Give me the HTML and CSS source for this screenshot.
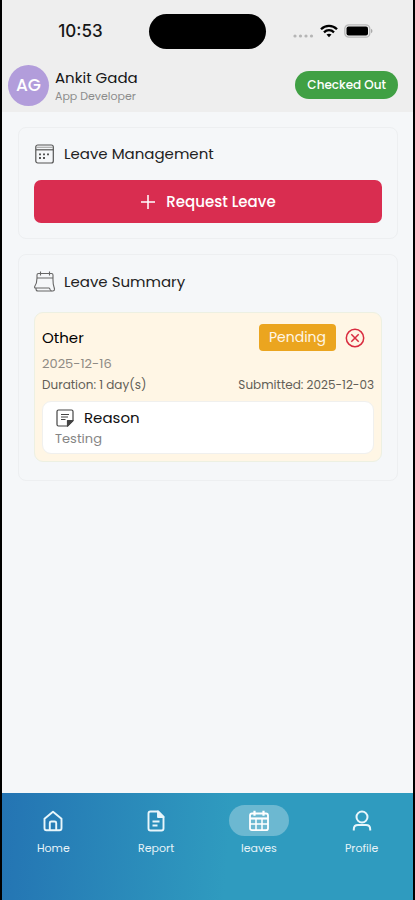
FILE: index.html
```html
<!DOCTYPE html>
<html lang="en">
<head>
<meta charset="utf-8">
<meta name="viewport" content="width=device-width, initial-scale=1">
<title>Leave Management</title>
<link rel="stylesheet" href="styles.css">
</head>
<body>
<div class="phone">
  <div class="status">
    <span class="time">10:53</span>
    <span class="island"></span>
    <span class="signals">
      <svg width="22" height="6" viewBox="0 0 22 6" fill="#b5b5b5"><circle cx="3" cy="4" r="1.6"/><circle cx="8.500" cy="4" r="1.600"/><circle cx="14" cy="4" r="1.600"/><circle cx="19.500" cy="4" r="1.600"/></svg>
      <svg width="18" height="14" viewBox="0 0 18 14" fill="none" stroke="#000" stroke-width="2.300"><path d="M1 5.200C5.500.700 12.500.700 17 5.200"/><path d="M4 8.300c2.900-2.800 7.100-2.800 10 0"/><path d="M6.500 10.600c1.500-1.300 3.500-1.300 5 0L9 13.200z" fill="#000" stroke="none"/></svg>
      <svg width="29" height="14" viewBox="0 0 29 14"><rect x=".8" y=".8" width="25" height="12.400" rx="4" fill="none" stroke="#b9b9b9" stroke-width="1.300"/><rect x="2.500" y="2.500" width="21.500" height="9" rx="2" fill="#000"/><path d="M27 4.800c2 .8 2 3.600 0 4.400z" fill="#aaa"/></svg>
    </span>
  </div>
  <header class="header">
    <span class="avatar">AG</span>
    <div class="person">
      <span class="name">Ankit Gada</span>
      <span class="role">App Developer</span>
    </div>
    <button class="checked" type="button">Checked Out</button>
  </header>
  <main class="content">
    <section class="card">
      <h2 class="card-title">
        <svg width="22" height="22" viewBox="0 0 22 22" fill="none" stroke="#555" stroke-width="1.200"><rect x="1.800" y="2" width="17.500" height="18" rx="2"/><path d="M2 4.300h17" stroke="#aaa"/><path d="M2 6.800h17.500"/><path d="M5 11.300h2m2 0h2m2 0h2M5 15h2m2 0h2" stroke-width="1.800"/></svg>
        Leave Management
      </h2>
      <button class="request" type="button">
        <svg width="16" height="16" viewBox="0 0 16 16" fill="none" stroke="#fff" stroke-width="1.500"><path d="M8 1v14M1 8h14"/></svg>
        Request Leave
      </button>
    </section>
    <section class="card summary">
      <h2 class="card-title">
        <svg width="22" height="22" viewBox="0 0 22 22" fill="none" stroke="#666" stroke-width="1.100" stroke-linejoin="round"><path d="M3 7V4q0-1.500 1.500-1.500h13Q19 2.500 19 4v3c0 4-.2 6 1 9M3 7c0 4-.5 6-2.300 8.500Q.3 17 1.500 17h14"/><path d="M3 7h16M6.500.500v4M15.500.500v4M2 17v1q0 2 2 2h15q1.700-.2 1.500-2l-.5-2"/><path d="M15.500 17q.5 2.500 2 3"/></svg>
        Leave Summary
      </h2>
      <article class="entry">
        <div class="entry-top">
          <h3 class="kind">Other</h3>
          <span class="pending">Pending</span>
          <button class="cancel" type="button" aria-label="Cancel request">
            <svg width="20" height="20" viewBox="0 0 20 20" fill="none" stroke="#d92c3f" stroke-width="1.500"><circle cx="10" cy="10" r="8.700"/><path d="M6.300 6.300l7.400 7.400M13.700 6.300l-7.400 7.400"/></svg>
          </button>
        </div>
        <div class="date">2025-12-16</div>
        <div class="meta"><span>Duration: 1 day(s)</span><span>Submitted: 2025-12-03</span></div>
        <div class="reason">
          <h4 class="reason-title">
            <svg width="20" height="20" viewBox="0 0 20 20" fill="none" stroke="#444" stroke-width="1.200" stroke-linejoin="round"><path d="M12.500 18H3.500Q2 18 2 16.500v-13Q2 2 3.500 2h13Q18 2 18 3.500v9z"/><path d="M12.500 18v-5.500H18z" fill="#444"/><path d="M6 6.500h8M6 9h7M6 11.500h4.500" stroke-width="1"/></svg>
            Reason
          </h4>
          <p class="reason-text">Testing</p>
        </div>
      </article>
    </section>
  </main>
  <nav class="tabs">
    <a class="tab" href="#home">
      <span class="tab-icon"><svg width="24" height="24" viewBox="0 0 24 24" fill="none" stroke="#e8f6fb" stroke-width="1.900" stroke-linejoin="round"><path d="M3.500 9.800 12 2.800l8.500 7v9.400q0 2-2 2h-13q-2 0-2-2z"/><path d="M8.800 21v-7q0-1.500 1.500-1.500h3.400q1.500 0 1.500 1.500v7"/></svg></span>
      Home
    </a>
    <a class="tab" href="#report">
      <span class="tab-icon"><svg width="24" height="24" viewBox="0 0 24 24" fill="none" stroke="#e8f6fb" stroke-width="1.900" stroke-linejoin="round"><path d="M14 2.500H6.500q-2 0-2 2v15q0 2 2 2h11q2 0 2-2V8z"/><path d="M14 2.500V8h5.500z" fill="#e8f6fb"/><path d="M8.500 12.500h7M8.500 16.500h5"/></svg></span>
      Report
    </a>
    <a class="tab" href="#leaves" aria-current="page">
      <span class="tab-icon active"><svg width="24" height="24" viewBox="0 0 24 24" fill="none" stroke="#fff" stroke-width="1.800" stroke-linejoin="round"><path d="M5 4.500h14q2 0 2 2v12.700q0 2-2 2H5q-2 0-2-2V6.500q0-2 2-2z"/><path d="M7.500 1.800v5M16.500 1.800v5" stroke-width="2.200"/><path d="M3 9.500h18" stroke-width="2.200"/><path d="M3 15h18M9 9.500V21M15 9.500V21" stroke-width="1.500"/></svg></span>
      leaves
    </a>
    <a class="tab" href="#profile">
      <span class="tab-icon"><svg width="24" height="24" viewBox="0 0 24 24" fill="none" stroke="#e8f6fb" stroke-width="2"><circle cx="12" cy="8" r="5.500"/><path d="M3.800 21.500v-1.300q0-4.200 4.200-4.200h8q4.200 0 4.200 4.200v1.300"/></svg></span>
      Profile
    </a>
  </nav>
</div>
</body>
</html>
```
FILE: styles.css
```css
* { box-sizing: border-box; }
body, h2, h3, h4, p { margin: 0; }
body { font-family: Poppins, Inter, sans-serif; color: #161616; }
svg { display: block; flex: none; }
button { font-family: inherit; border: 0; }
h2, h3, h4 { font-weight: 400; }

.phone {
  display: flex;
  flex-direction: column;
  min-height: 100vh;
  background: #f5f7f9;
  border: solid #000;
  border-width: 0 2px;
}

.status {
  display: grid;
  grid-template-columns: 1fr auto 1fr;
  align-items: center;
  height: 62px;
  background: #eee;
}
.time { font-family: Inter, sans-serif; font-size: 17px; font-weight: 500; text-align: center; padding-left: 10px; }
.island { width: 117px; height: 35px; border-radius: 18px; background: #000; }
.signals { display: flex; align-items: center; gap: 6px; padding-left: 26px; }
.signals svg:first-child { align-self: flex-end; }

.header {
  display: flex;
  align-items: center;
  gap: 6px;
  height: 50px;
  padding: 0 15px 4px 6px;
  background: #eee;
}
.avatar {
  display: grid;
  place-items: center;
  width: 41px;
  height: 41px;
  border-radius: 50%;
  background: #b29ddb;
  color: #fff;
  font-size: 17px;
  font-weight: 500;
}
.person { display: flex; flex-direction: column; flex: 1; padding-top: 2px; }
.name { font-size: 15px; line-height: 20px; }
.role { font-size: 11px; line-height: 16px; color: #8c8c8c; }
.checked {
  height: 28px;
  padding: 0 12px;
  border-radius: 14px;
  background: #40a044;
  color: #fff;
  font-size: 12px;
  font-weight: 500;
}

.content {
  display: flex;
  flex-direction: column;
  flex: 1;
  gap: 15px;
  padding: 15px 15px 15px 16px;
}
.card {
  display: flex;
  flex-direction: column;
  gap: 15px;
  padding: 15px;
  border: 1px solid #edeff1;
  border-radius: 8px;
}
.card-title {
  display: flex;
  align-items: center;
  gap: 8px;
  font-size: 15px;
  line-height: 22px;
  color: #222;
}
.request {
  display: flex;
  align-items: center;
  justify-content: center;
  gap: 10px;
  height: 43px;
  border-radius: 7px;
  background: #d92d50;
  color: #fff;
  font-size: 15px;
  font-weight: 500;
}
.summary { gap: 19px; padding-top: 16px; padding-bottom: 18px; }
.entry {
  padding: 11px 7px 7px;
  border: 1px solid #edf0e2;
  border-radius: 9px;
  background: #fff6e5;
}
.entry-top { display: flex; align-items: center; gap: 9px; padding-right: 9px; }
.kind { flex: 1; font-size: 15px; color: #000; }
.pending {
  padding: 0 10px;
  border-radius: 4px;
  background: #eba51f;
  color: #fff6e5;
  font-size: 14px;
  line-height: 27px;
}
.cancel { padding: 0; background: none; }
.date { margin-top: 3px; font-size: 13px; line-height: 20px; color: #8f8b84; }
.meta {
  display: flex;
  justify-content: space-between;
  margin: 3px 0 8px;
  font-size: 12px;
  line-height: 16px;
  color: #625e57;
}
.reason {
  padding: 5px 12px 4px;
  border: 1px solid #f0f0ee;
  border-radius: 9px;
  background: #fff;
}
.reason-title {
  display: flex;
  align-items: center;
  gap: 9px;
  font-size: 15px;
  line-height: 22px;
  color: #111;
}
.reason-text { font-size: 13px; line-height: 20px; color: #858585; }

.tabs {
  display: grid;
  grid-template-columns: repeat(4, 1fr);
  height: 107px;
  padding-top: 12px;
  background: linear-gradient(95deg, #2474b3, #2f9bbf 55%, #2f9bbf);
}
.tab {
  display: flex;
  flex-direction: column;
  align-items: center;
  gap: 4px;
  color: #e6f3f8;
  font-size: 11px;
  line-height: 16px;
  text-decoration: none;
}
.tab-icon {
  display: grid;
  place-items: center;
  width: 60px;
  height: 31px;
  border-radius: 16px;
}
.active { background: #6cb8d1; }
```
